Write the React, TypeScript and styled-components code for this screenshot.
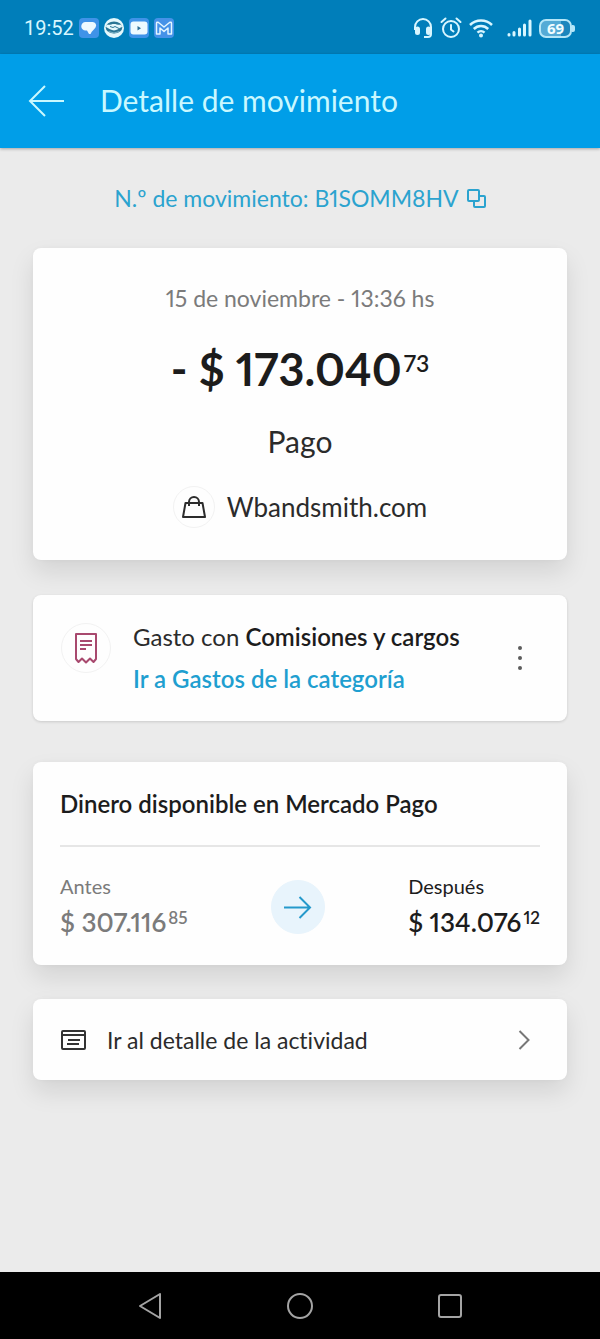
import React from "react";
import styled, { createGlobalStyle } from "styled-components";

const GlobalStyle = createGlobalStyle`
  *, *::before, *::after { box-sizing: border-box; }
  body { margin: 0; background: #ebebeb; }
  button { font: inherit; color: inherit; background: none; border: 0; padding: 0; cursor: pointer; }
  a { color: inherit; text-decoration: none; }
  h1, h2, p { margin: 0; font-weight: 400; }
  svg { display: block; flex: none; }
`;

const Screen = styled.div`
  display: flex;
  flex-direction: column;
  min-height: 100vh;
  background: #ebebeb;
  color: #2b2b2b;
  font-family: Lato, "Liberation Sans", sans-serif;
  font-variant-ligatures: none;
  font-variant-numeric: proportional-nums;
`;

const StatusBar = styled.div`
  display: flex;
  align-items: center;
  justify-content: space-between;
  height: 54px;
  padding: 2px 25px 0 24px;
  background: #007eba;
  color: #d8f6ff;
  font-family: Roboto, sans-serif;
  font-size: 20px;
  font-variant-numeric: tabular-nums;
`;

const StatusGroup = styled.div<{ $gap: number }>`
  display: flex;
  align-items: center;
  gap: ${(p) => p.$gap}px;
`;

const AppBar = styled.header`
  display: flex;
  align-items: center;
  gap: 35px;
  height: 94px;
  padding: 0 28px;
  background: #009ee8;
  color: #c9f8ff;
  box-shadow: 0 1px 3px rgba(0, 0, 0, 0.3);
`;

const Title = styled.h1`
  font-size: 30px;
  line-height: 34px;
  padding-bottom: 2px;
`;

const Content = styled.main`
  display: flex;
  flex-direction: column;
  flex: 1;
  padding: 0 33px 60px;
`;

const MovementButton = styled.button`
  display: flex;
  align-items: center;
  align-self: center;
  gap: 8px;
  height: 100px;
  color: #2ba3cf;
  font-size: 23px;
`;

const Card = styled.section<{ $flat?: boolean }>`
  border-radius: 8px;
  background: #fefefe;
  box-shadow: ${(p) =>
    p.$flat ? "0 1px 3px rgba(0, 0, 0, 0.14)" : "0 12px 24px rgba(0, 0, 0, 0.1), 0 0 4px rgba(0, 0, 0, 0.03)"};
`;

const SummaryCard = styled(Card)`
  display: flex;
  flex-direction: column;
  align-items: center;
  padding: 36px 27px 32px;
`;

const DateText = styled.p`
  color: #7b7b7b;
  font-size: 23px;
  line-height: 28px;
`;

const Total = styled.p`
  display: flex;
  margin: 29px 0 28px;
  color: #1c1c1c;
  font-size: 45px;
  font-weight: 700;
  line-height: 56px;
`;

const TotalCents = styled.span`
  padding-left: 2px;
  font-size: 23px;
  font-weight: 600;
  line-height: 44px;
`;

const Kind = styled.p`
  font-size: 30px;
  line-height: 32px;
`;

const Merchant = styled.p`
  display: flex;
  align-items: center;
  gap: 12px;
  margin-top: 29px;
  font-size: 26px;
`;

const RoundIcon = styled.span<{ $size: number; $tint?: boolean }>`
  display: flex;
  align-items: center;
  justify-content: center;
  flex: none;
  width: ${(p) => p.$size}px;
  height: ${(p) => p.$size}px;
  border: 1px solid ${(p) => (p.$tint ? "#e8f4fc" : "#f2f2f2")};
  border-radius: 50%;
  background: ${(p) => (p.$tint ? "#e8f4fc" : "transparent")};
`;

const CategoryCard = styled(Card)`
  display: flex;
  align-items: flex-start;
  gap: 22px;
  margin-top: 35px;
  padding: 21px 27px 21px 28px;

  > span { margin-top: 7px; }
`;

const CategoryText = styled.div`
  flex: 1;
  font-size: 24px;
  line-height: 42px;

  strong { color: #1c1c1c; font-weight: 600; }
`;

const CategoryLink = styled.a`
  color: #1f9fd0;
  font-weight: 600;
`;

const MenuButton = styled.button`
  display: flex;
  align-items: center;
  justify-content: center;
  align-self: stretch;
  width: 40px;
`;

const BalanceCard = styled(Card)`
  margin-top: 41px;
  padding: 27px 27px 23px;
`;

const BalanceTitle = styled.h2`
  padding-bottom: 26px;
  border-bottom: 2px solid #e6e6e6;
  color: #1c1c1c;
  font-size: 24px;
  font-weight: 600;
  line-height: 30px;
`;

const BalanceRow = styled.div`
  display: flex;
  align-items: center;
  justify-content: space-between;
  padding-top: 25px;
`;

const Balance = styled.div<{ $muted?: boolean }>`
  color: ${(p) => (p.$muted ? "#7b7b7b" : "#1c1c1c")};
`;

const BalanceLabel = styled.p`
  margin-bottom: 2px;
  font-size: 20px;
  line-height: 28px;
`;

const BalanceAmount = styled.p`
  display: flex;
  font-size: 26px;
  font-weight: 600;
  line-height: 40px;
`;

const BalanceCents = styled.span`
  padding-left: 2px;
  font-size: 17px;
  line-height: 32px;
`;

const ActivityLink = styled.a`
  display: flex;
  align-items: center;
  gap: 21px;
  margin-top: 34px;
  padding: 0 37px 0 28px;
  height: 81px;
  border-radius: 8px;
  background: #fefefe;
  box-shadow: 0 12px 24px rgba(0, 0, 0, 0.1), 0 0 4px rgba(0, 0, 0, 0.03);
  font-size: 23px;

  span { flex: 1; }
`;

const NavBar = styled.nav`
  display: flex;
  align-items: center;
  justify-content: center;
  gap: 110px;
  height: 67px;
  background: #000;
  color: #a4a4a4;

  button { display: flex; justify-content: center; width: 40px; }
`;

const ChatIcon = () => (
  <svg width="20" height="20" viewBox="0 0 20 20">
    <rect width="20" height="20" rx="4" fill="#3f93e8" />
    <path d="M6.500 4h7a3.500 3.500 0 0 1 3 5.500C15.500 11.500 13 12.500 11.500 16L10 16 8 12.500H6.500A4.200 4.200 0 0 1 6.500 4z" fill="#eefaff" />
  </svg>
);

const HandshakeIcon = () => (
  <svg width="20" height="20" viewBox="0 0 20 20">
    <circle cx="10" cy="10" r="10" fill="#e4f8fc" />
    <ellipse cx="10" cy="9.500" rx="8.300" ry="6" fill="#2a7594" />
    <path d="M2.500 6.500c3 .8 5-.5 7.500-.5s4.500 1.300 7.500.5l.5 2.500c-1.500.5-2.500 1-3.500 2L12 12l-2 .5L8 12l-2.500-1L2 9z" fill="#e4f8fc" />
    <path d="M6 8.500l3 1 2-1 4 2" stroke="#2a7594" fill="none" />
    <path d="M4.500 13.500q5.500 3 11 0" stroke="#7fb4c8" fill="none" />
  </svg>
);

const VideoIcon = () => (
  <svg width="20" height="20" viewBox="0 0 20 20">
    <rect width="20" height="20" rx="4" fill="#3f93e8" />
    <rect x="1.500" y="3.500" width="17" height="13" rx="3" fill="#eefaff" />
    <path d="M8.500 8v4.500l3.500-2.250z" fill="#2b6f97" />
  </svg>
);

const MailIcon = () => (
  <svg width="20" height="20" viewBox="0 0 20 20">
    <rect width="20" height="20" rx="4" fill="#4592e8" />
    <path d="M2.500 16V5.500q0-2 2-1L10 9l5.500-4.500q2-1 2 1V16h-3.500v-6L10 13.500 6 10v6z" fill="none" stroke="#e4f6ff" strokeWidth="1.500" strokeLinejoin="round" />
  </svg>
);

const HeadsetIcon = () => (
  <svg width="20" height="22" viewBox="0 0 20 22" fill="none" stroke="currentColor">
    <path d="M2 13V10a8 8 0 0 1 16 0v7q0 3-3 3h-4" strokeWidth="2" />
    <path d="M4.500 12v3.500M15.500 12v3.500" strokeWidth="5" strokeLinecap="round" />
  </svg>
);

const AlarmIcon = () => (
  <svg width="22" height="22" viewBox="0 0 22 22" fill="none" stroke="currentColor" strokeWidth="2" strokeLinecap="round">
    <circle cx="11" cy="12" r="8" />
    <path d="M11 8v4.500l2.500 2M1.500 5l4-3.500M20.500 5l-4-3.500" />
  </svg>
);

const WifiIcon = () => (
  <svg width="24" height="20" viewBox="0 0 24 20" fill="none" stroke="currentColor" strokeWidth="2.500">
    <path d="M1 7a15.500 15.500 0 0 1 22 0M4.800 11a10.200 10.200 0 0 1 14.400 0M8.500 14.700a5 5 0 0 1 7 0" />
    <circle cx="12" cy="17.500" r="2" fill="currentColor" stroke="none" />
  </svg>
);

const SignalIcon = () => (
  <svg width="25" height="18" viewBox="0 0 25 18" stroke="currentColor" strokeWidth="3" strokeLinecap="round">
    <path d="M2 15.500v.5M7 13.500V16M12.500 10v6M17.500 6v10M23 2v14" />
  </svg>
);

const Battery = styled.span`
  display: flex;
  align-items: center;

  b {
    width: 33px;
    height: 19px;
    border: 2px solid #b4e6f8;
    border-radius: 7px;
    background: linear-gradient(90deg, #55abd6 69%, #1b86bd 69%);
    font: 700 15px/15px "Noto Sans", sans-serif;
    text-align: center;
    color: #f2fdff;
  }

  i { width: 3px; height: 7px; background: #b4e6f8; border-radius: 0 2px 2px 0; }
`;

export default function App() {
  return (
    <Screen>
      <GlobalStyle />
      <StatusBar>
        <StatusGroup $gap={5}>
          <span>19:52</span>
          <ChatIcon />
          <HandshakeIcon />
          <VideoIcon />
          <MailIcon />
        </StatusGroup>
        <StatusGroup $gap={7}>
          <HeadsetIcon />
          <AlarmIcon />
          <WifiIcon />
          <span />
          <SignalIcon />
          <Battery>
            <b>69</b>
            <i />
          </Battery>
        </StatusGroup>
      </StatusBar>

      <AppBar>
        <button aria-label="Volver">
          <svg width="37" height="32" viewBox="0 0 37 32" fill="none" stroke="currentColor" strokeWidth="2">
            <path d="M36 16H2M17 1L2 16l15 15" />
          </svg>
        </button>
        <Title>Detalle de movimiento</Title>
      </AppBar>

      <Content>
        <MovementButton>
          N.º de movimiento: B1SOMM8HV
          <svg width="19" height="19" viewBox="0 0 19 19" fill="none" stroke="currentColor" strokeWidth="2">
            <rect x="1" y="1" width="11" height="11" rx="1" />
            <path d="M12 7h5a1 1 0 0 1 1 1v9a1 1 0 0 1-1 1H8a1 1 0 0 1-1-1v-5" />
          </svg>
        </MovementButton>

        <SummaryCard>
          <DateText>15 de noviembre - 13:36 hs</DateText>
          <Total>
            - $ 173.040<TotalCents>73</TotalCents>
          </Total>
          <Kind>Pago</Kind>
          <Merchant>
            <RoundIcon $size={42}>
              <svg width="24" height="22" viewBox="0 0 24 22" fill="none" stroke="#2c2c2c" strokeWidth="2" strokeLinejoin="round">
                <path d="M3.500 7h17L23 21H1zM7 10V6a5 5 0 0 1 10 0v4" />
              </svg>
            </RoundIcon>
            Wbandsmith.com
          </Merchant>
        </SummaryCard>

        <CategoryCard $flat>
          <RoundIcon $size={50}>
            <svg width="22" height="31" viewBox="0 0 22 31" fill="none" stroke="#a8496e" strokeWidth="2">
              <path d="M1 1h20v25l-2.500 3-3.500-3.500-4 4-4-4L3.500 29 1 26z" strokeLinejoin="round" />
              <path d="M5 8h12M5 12h12M5 16h6" />
            </svg>
          </RoundIcon>
          <CategoryText>
            <p>
              Gasto con <strong>Comisiones y cargos</strong>
            </p>
            <CategoryLink href="#gastos">Ir a Gastos de la categoría</CategoryLink>
          </CategoryText>
          <MenuButton aria-label="Más opciones">
            <svg width="4" height="24" viewBox="0 0 4 24" fill="#5c5c5c">
              <circle cx="2" cy="2" r="2" />
              <circle cx="2" cy="12" r="2" />
              <circle cx="2" cy="22" r="2" />
            </svg>
          </MenuButton>
        </CategoryCard>

        <BalanceCard>
          <BalanceTitle>Dinero disponible en Mercado Pago</BalanceTitle>
          <BalanceRow>
            <Balance $muted>
              <BalanceLabel>Antes</BalanceLabel>
              <BalanceAmount>
                $ 307.116<BalanceCents>85</BalanceCents>
              </BalanceAmount>
            </Balance>
            <RoundIcon $size={54} $tint>
              <svg width="28" height="23" viewBox="0 0 28 23" fill="none" stroke="#2599cb" strokeWidth="2">
                <path d="M0 11.500h26M15.500 1L26 11.500 15.500 22" />
              </svg>
            </RoundIcon>
            <Balance>
              <BalanceLabel>Después</BalanceLabel>
              <BalanceAmount>
                $ 134.076<BalanceCents>12</BalanceCents>
              </BalanceAmount>
            </Balance>
          </BalanceRow>
        </BalanceCard>

        <ActivityLink href="#actividad">
          <svg width="25" height="20" viewBox="0 0 25 20" fill="none" stroke="#333" strokeWidth="2">
            <rect x="1" y="1" width="23" height="18" rx="1" />
            <path d="M1 5h23M7 10h12M6 14h12" />
          </svg>
          <span>Ir al detalle de la actividad</span>
          <svg width="12" height="20" viewBox="0 0 12 20" fill="none" stroke="#777" strokeWidth="2">
            <path d="M1.500 1l9 9-9 9" />
          </svg>
        </ActivityLink>
      </Content>

      <NavBar>
        <button aria-label="Atrás">
          <svg width="22" height="26" viewBox="0 0 22 26" fill="none" stroke="currentColor" strokeWidth="2" strokeLinejoin="round">
            <path d="M21 1v24L1 13z" />
          </svg>
        </button>
        <button aria-label="Inicio">
          <svg width="26" height="26" viewBox="0 0 26 26" fill="none" stroke="currentColor" strokeWidth="2">
            <circle cx="13" cy="13" r="12" />
          </svg>
        </button>
        <button aria-label="Recientes">
          <svg width="24" height="24" viewBox="0 0 24 24" fill="none" stroke="currentColor" strokeWidth="2">
            <rect x="1" y="1" width="22" height="22" rx="2" />
          </svg>
        </button>
      </NavBar>
    </Screen>
  );
}
